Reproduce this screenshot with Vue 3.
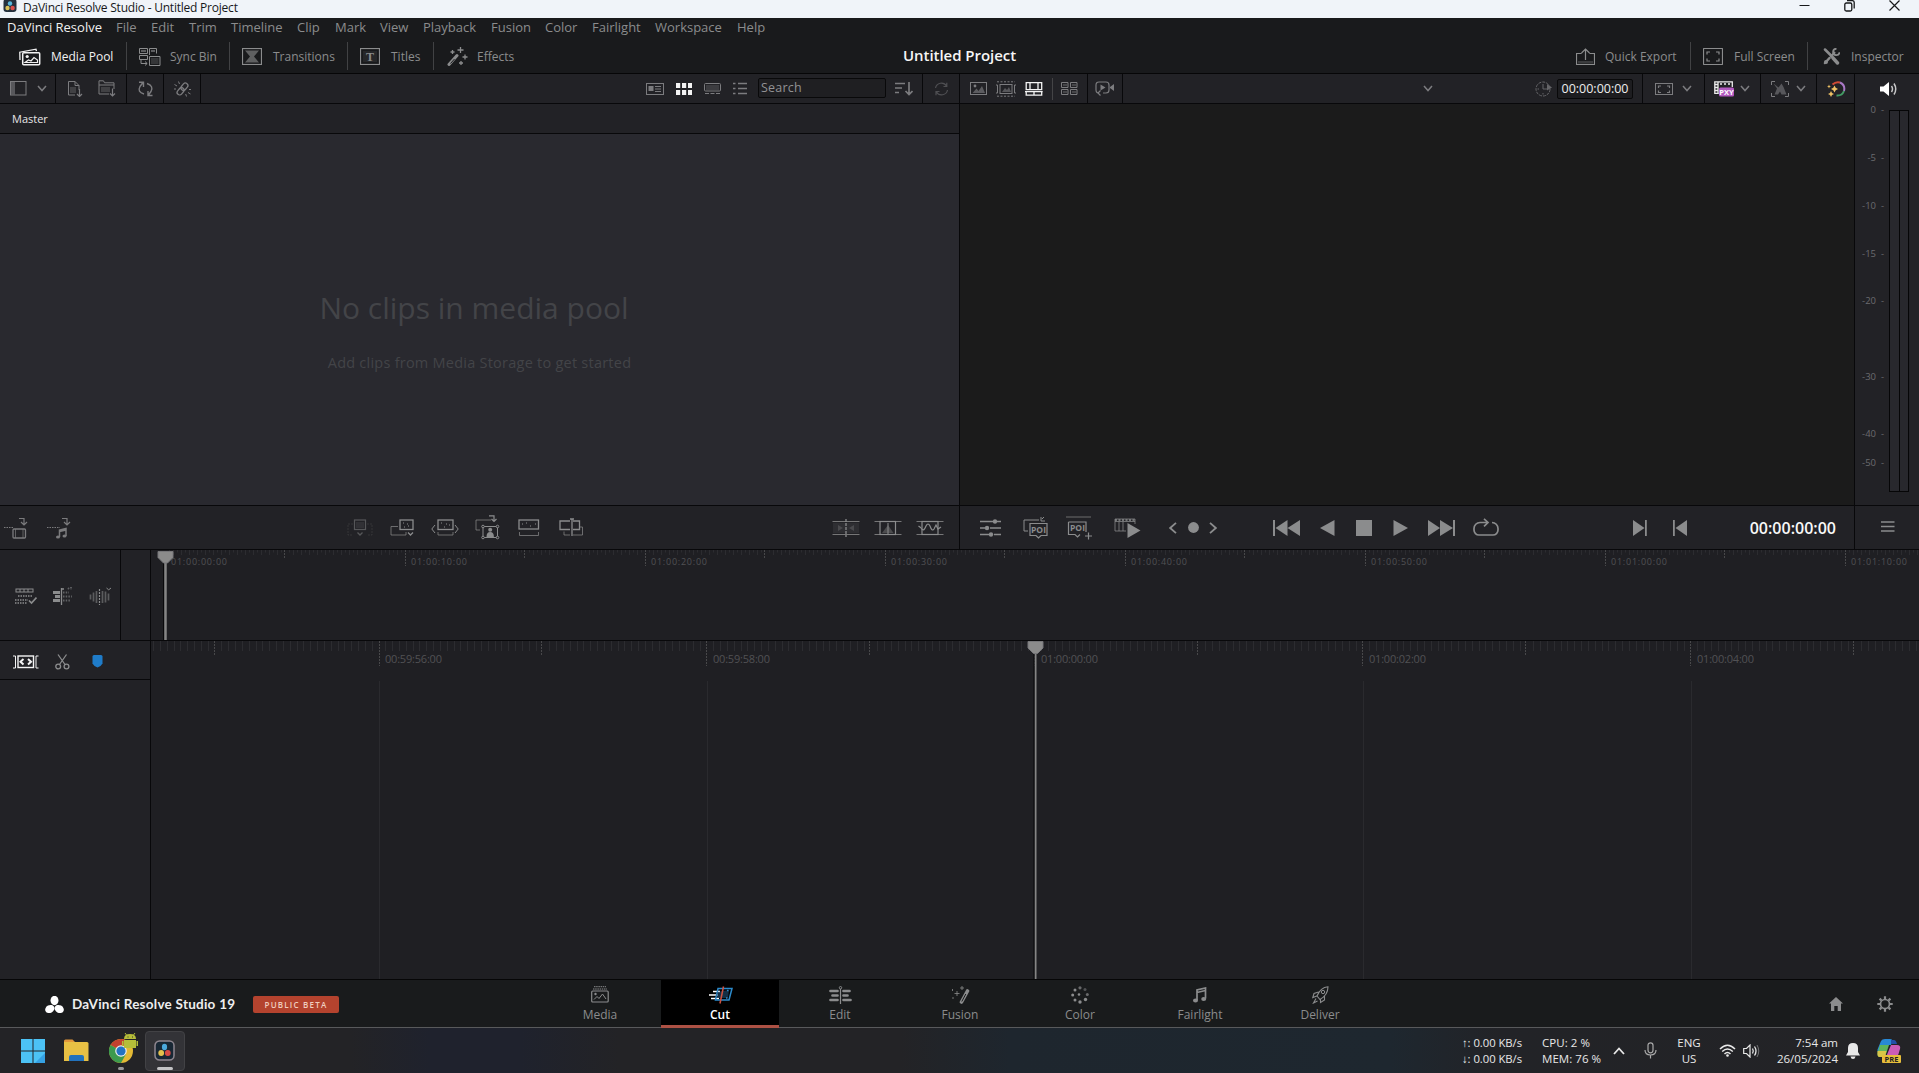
<script setup>
import { h } from 'vue'

// Icon bodies are drawn in currentColor; each entry is [width, height, markup].
const S = 'fill="none" stroke="currentColor"'
const icons = {
  app: [14, 13, '<rect x=".5" y="-1" width="13" height="13" rx="3" fill="#25313e"/><circle cx="7" cy="3.5" r="2.2" fill="#5ab8dd"/><circle cx="4.5" cy="8" r="2.2" fill="#d9c25a"/><circle cx="9.6" cy="8" r="2.2" fill="#d9504c"/>'],
  min: [11, 11, `<path d="M.5 5.5h10" ${S}/>`],
  restore: [11, 12, `<rect x=".8" y="3" width="7" height="8" rx="1.5" ${S} stroke-width="1.3"/><path d="M3 .6h5.200q2 0 2 2v6" ${S} stroke-width="1.3"/>`],
  close: [11, 11, `<path d="M.5.5l10 10M10.500.5l-10 10" ${S} stroke-width="1.2"/>`],
  pool: [22, 18, `<path d="M1 12L.8 4.200 17 1.200l.4 2" ${S} stroke-width="1.3"/><rect x="3.700" y="4.700" width="17" height="12" rx="1" ${S} stroke-width="1.500"/><circle cx="8.200" cy="8.500" r="1.600" fill="currentColor"/><path d="M6 14.500l3.500-2.500 2.500 1 3-3.500 3.500 2.500v2.500z" ${S} stroke-width="1.200"/>`],
  sync: [22, 18, `<path d="M.5.5h8v5h-8zM.5 7.500h8v4h-8zM10.500 7V.5h7v5" ${S}/><path d="M2 2h5v2H2zM12 2h4v2h-4z" fill="currentColor" opacity=".6"/><path d="M10.500 8.500h10.500v9H10.500zM2 12v3.500h6m-2-2l2.200 2-2.200 2" ${S}/><rect x="12" y="10" width="7.500" height="6" fill="currentColor" opacity=".25"/>`],
  trans: [20, 17, `<rect x=".5" y=".5" width="19" height="16" ${S} stroke-width="1.200"/><path d="M3 2.500h14L12 8.500l5 6H3l5-6z" fill="currentColor" opacity=".62"/>`],
  titles: [20, 17, `<rect x=".5" y=".5" width="19" height="16" ${S} stroke-width="1.200"/><rect x="3" y="3" width="14" height="11" fill="currentColor" opacity=".12"/><text x="10" y="12.700" font-size="12" font-weight="bold" text-anchor="middle" font-family="Liberation Serif" fill="currentColor">T</text>`],
  fx: [21, 19, `<path d="M2 17.500l8-9" ${S} stroke-width="3" stroke-linecap="round"/><path d="M3.500 16.500l4-4.500" stroke="#191a1c" stroke-width="1"/><path d="M13.500 0v6M10.500 3h6M5.500 3v4M3.500 5h4M18 7.500v5M15.500 10h5M14 14v4M12 16h4" ${S} stroke-width="1.300"/>`],
  export: [19, 18, `<path d="M5.500 5.500h-5v11h18v-11h-5M9.500 12V1.500M5.500 5l4-4 4 4" ${S} stroke-width="1.200"/><rect x="2" y="13" width="15" height="2.500" fill="currentColor" opacity=".3"/>`],
  full: [20, 17, `<rect x=".5" y=".5" width="19" height="16" rx=".5" ${S} stroke-width="1.200"/><path d="M4 6.500V4h3M13 4h3v2.500M16 10.500V13h-3M7 13H4v-2.500" ${S} stroke-width="1.200"/>`],
  tools: [17, 17, `<path d="M2 1.500l7.500 7.500M6.500 10L2 15" ${S} stroke-width="2.500" stroke-linecap="round"/><path d="M10 10l4.500 5" ${S} stroke-width="3.400" stroke-linecap="round"/><path d="M7.500 9l4.500-5" ${S} stroke-width="2"/><path d="M13.500.8a3.200 3.200 0 1 0 3 3.500" ${S} stroke-width="1.800"/><circle cx="3" cy="14" r="2" fill="currentColor"/>`],
  panel: [17, 15, `<rect x=".5" y=".5" width="15.500" height="13.500" ${S}/><rect x="1" y="1" width="4" height="12.500" fill="currentColor" opacity=".6"/>`],
  chev: [10, 7, `<path d="M1 1l4 4.500L9 1" ${S} stroke-width="1.500"/>`],
  imp: [15, 16, `<path d="M7 14H.5V.5h6.500l4 4V9M7 .5v4h4" ${S}/><rect x="2" y="6" width="6" height="6" fill="currentColor" opacity=".35"/><path d="M11.500 8v7.500M9 13l2.500 2.500L14 13" ${S} stroke-width="1.200"/>`],
  impf: [18, 17, `<path d="M11 14H1V.8h4.500l1 2H16V9M1 5h15" ${S}/><rect x="3" y="7" width="9" height="5" fill="currentColor" opacity=".35"/><path d="M14.500 8.500V16M12 13.500l2.500 2.500 2.500-2.500" ${S} stroke-width="1.200"/>`],
  resync: [17, 16, `<path d="M7 13Q0 11 3 5.500L6 1.500M2 1.200h4.500V6M10 2.500Q17 5 14 10.500l-3 4M15.500 14.500H11V10" ${S} stroke-width="1.400"/>`],
  link: [17, 16, `<g transform="rotate(-50 8.500 8)"><rect x="1.500" y="5.500" width="8" height="5" rx="2.500" ${S} stroke-width="1.300"/><rect x="7.500" y="5.500" width="8" height="5" rx="2.500" ${S} stroke-width="1.300"/></g><path d="M4.500.5l1 2.500M.5 3.500l2.500 1.500M0 8h2M12.500 15.500l-.8-2.500M16.500 13l-2.500-1.500M17 8.500h-2" ${S}/>`],
  card: [18, 12, `<rect x=".5" y=".5" width="17" height="11" ${S}/><rect x="2.500" y="3" width="5" height="5" fill="currentColor"/><path d="M9 3.500h6M9 6h6M9 8.500h6" ${S}/>`],
  grid: [16, 12, '<path fill="currentColor" d="M0 0h4.200v5H0zM6 0h4.200v5H6zM12 0h4v5h-4zM0 7h4.200v5H0zM6 7h4.200v5H6zM12 7h4v5h-4z"/>'],
  strip: [17, 12, `<rect x=".5" y=".5" width="16" height="7.500" rx="1" ${S}/><rect x="2" y="2" width="13" height="5" fill="currentColor" opacity=".3"/><path d="M1 10.500h15" ${S} stroke-width="1.200" stroke-dasharray="4 1.500"/>`],
  list: [15, 13, `<path d="M0 1.500h2.500M0 6.500h2.500M0 11.500h2.500M5 1.500h9M5 6.500h9M5 11.500h9" ${S} stroke-width="1.700"/>`],
  sort: [18, 14, `<path d="M0 1.500h10M0 6h7M0 10.500h4M14 0v12M10.500 9l3.500 3.500L17.500 9" ${S} stroke-width="1.700"/>`],
  reload: [15, 14, `<path d="M1.500 6A6 6 0 0 1 12.500 4M13.500 8A6 6 0 0 1 2.500 10M12.800.8V4.500H9.500M2 13.200V9.500h3.500" ${S} stroke-width="1.200"/>`],
  pic: [17, 13, `<rect x=".5" y=".5" width="16" height="12" ${S}/><circle cx="5" cy="4" r="1.400" fill="currentColor"/><path d="M2.500 11l4-4.500 2 2.500L12 4l3 7z" fill="currentColor" opacity=".65"/>`],
  clip: [20, 16, `<path d="M1 .8h18M1 15.200h18" ${S} stroke-dasharray="2 1.500"/><path d="M0 4h1.500v8H0M20 4h-1.500v8H20" ${S}/><rect x="4" y="3.500" width="12" height="9" ${S}/><path d="M6 11l3-4 2 2 2-3 2 5z" fill="currentColor" opacity=".6"/>`],
  tape: [18, 14, `<path d="M1.200.7h15.500v7H1.200zM5 .7v7M13 .7v7M0 9.700h17.700M1.200 9.700v3.500h15.500v-3.500M9 9.700v3.500" ${S} stroke-width="1.300"/>`],
  multi: [17, 13, `<path d="M.5.500h6.500v5H.5zM9.500.500H16v5H9.500zM.5 7.500h6.500v5H.5zM9.500 7.500H16v5H9.500z" ${S}/><path d="M2 2h4v2H2zM11 2h4v2h-4zM2 9h4v2H2zM11 9h4v2h-4z" fill="currentColor" opacity=".4"/>`],
  cam: [20, 15, `<path d="M4 12Q1 12 1 9V4q0-3 3-3h7q3 0 3 3v5q0 3-3 3H8M5.500 14.500L3 12l2.500-2.500" ${S} stroke-width="1.200"/><path d="M5.500 3.500l5 3-5 3zM15 6l4-3v7l-4-3z" fill="currentColor"/>`],
  clock: [18, 16, `<circle cx="8" cy="8" r="7" ${S} stroke-dasharray="3 1"/><path d="M8 3v5h4M8 12v1.500M2.500 8H4" ${S}/><path d="M12 3l5 3.500-5 3z" fill="currentColor"/>`],
  safe: [18, 12, `<rect x=".5" y=".5" width="17" height="11" ${S}/><path d="M3.500 5V3H6M12 3h2.500v2M14.500 7.500V9.500H12M6 9.500H3.500v-2" ${S} stroke-width="1.200"/>`],
  pxy: [20, 16, `<path d="M18.300 6V.8H.8v11.500h4M4 1v11M.5 3.500H4M.5 6.500H4M.5 9.500H4" fill="none" stroke="#eee" stroke-width="1.300"/><path d="M6 3h2M10 3h2M14 3h2" stroke="#eee" stroke-width="1.300"/><rect x="5" y="6.500" width="15" height="9" rx="1.500" fill="#b35ac0"/><text x="12.500" y="14" font-size="7.500" font-weight="bold" text-anchor="middle" font-family="Open Sans" fill="#fff">PXY</text>`],
  track: [18, 16, `<path d="M.5 4V.5H4M14 .5h3.500V4M17.500 12v3.500H14M4 15.500H.5V12" ${S}/><path d="M2.500 2.500l5 4 3-4 2 3.500 3 7.500h-5l-1.500-3-2 3H3.500l2.500-6z" fill="currentColor" opacity=".6"/>`],
  magic: [19, 16, '<path d="M5.500 3.500Q9 .2 13 1.500" fill="none" stroke="#cf4b35" stroke-width="2"/><path d="M13 1.500Q18.500 4 17 10" fill="none" stroke="#a978c6" stroke-width="2"/><path d="M17 10Q15 15 9.500 14.500" fill="none" stroke="#439b65" stroke-width="2"/><path d="M7.500 4.500l1.200 2.300L11 8 8.700 9.200 7.500 11.500 6.300 9.200 4 8l2.300-1.200zM4 10l1 2 2 1-2 1-1 2-1-2-2-1 2-1zM2 3.500l.6 1.400L4 5.500l-1.400.6L2 7.500l-.6-1.400L0 5.500l1.400-.6z" fill="#efc265"/>'],
  spk: [18, 16, `<path d="M0 5.500h3.500L9 1v14l-5.500-4.500H0z" fill="currentColor"/><path d="M11.500 5q2 3 0 6M14 2.500q3.500 5.500 0 11" ${S} stroke-width="1.500" opacity=".75"/>`],
  vonly: [24, 22, `<path d="M0 10.500h10" ${S} stroke-dasharray="1.500 1"/><path d="M15 1.500h5v6M17 5l3 3 3-3" ${S} stroke-width="1.200"/><rect x="9" y="12" width="12.500" height="9" rx="1" ${S} stroke-width="1.300"/><path d="M11.500 12v9M19 12v9" ${S} stroke-width=".7"/>`],
  aonly: [24, 22, `<path d="M0 10.500h13" ${S} stroke-dasharray="1.500 1"/><path d="M15 1.500h5v6M17 5l3 3 3-3" ${S} stroke-width="1.200"/><path d="M12.500 20v-7l6.500-1.500V19M12.500 14.500L19 13" ${S} stroke-width="1.500"/><ellipse cx="11" cy="20" rx="2" ry="1.600" fill="currentColor"/><ellipse cx="17.500" cy="19" rx="2" ry="1.600" fill="currentColor"/>`],
  smart: [26, 18, `<path d="M6 5H1v11h4M20 5h5v11h-4" ${S} stroke-dasharray="2 1" opacity=".35"/><rect x="7.500" y="1" width="11" height="9.500" ${S} stroke-width="1.200"/><rect x="9" y="3" width="8" height="6" fill="currentColor" opacity=".3"/><path d="M10.500 13.500l2.500 2.500 2.500-2.500" ${S} stroke-width="1.300"/>`],
  append: [26, 18, `<rect x="10" y="1" width="13" height="9.500" ${S} stroke-width="1.300"/><path d="M13 4h1m3 1h1m-4 3h1m3-1h1" ${S}/><path d="M8 7.500H1V16h15v-3" ${S} opacity=".7"/><path d="M18 13.500l2.500 2.500 2.500-2.500" ${S} stroke-width="1.300"/>`],
  ripple: [28, 18, `<rect x="7" y="1" width="15" height="9.500" ${S} stroke-width="1.300"/><path d="M10 4h1m4 1h1m-3 3h1m4-2h1" ${S}/><path d="M7 13v3h15v-3" ${S} opacity=".7"/><path d="M4 6L.8 10 4 14M24 6l3.200 4L24 14" ${S}/>`],
  closeup: [26, 25, `<path d="M5 15H1V5h15" ${S} opacity=".7"/><path d="M14 .8h5v5M16.500 4l2.500 2.500L21.500 4" ${S} stroke-width="1.200"/><rect x="8" y="11.500" width="14.500" height="11" ${S}/><circle cx="15.200" cy="14.700" r="2" fill="currentColor"/><path d="M11.500 22q0-5 3.700-5t3.700 5z" fill="currentColor"/><g fill="#222226" stroke="currentColor"><circle cx="8" cy="11.500" r="1.300"/><circle cx="22.500" cy="11.500" r="1.300"/><circle cx="8" cy="22.500" r="1.300"/><circle cx="22.500" cy="22.500" r="1.300"/></g>`],
  place: [22, 18, `<rect x="1" y="1" width="19.500" height="9" ${S} stroke-width="1.300"/><path d="M4 5h1m3-1h1m3 3h1m4-2h1" ${S}/><path d="M1.500 13v3.500h19V13" ${S} opacity=".7"/>`],
  over: [24, 19, `<path d="M11 3H1v8.500h10M14 3h6.500v8.500H14" ${S} stroke-width="1.300"/><path d="M5 13.500V17h6M14 17h9.500V9H21" ${S} opacity=".7"/><path d="M13 1v17M11 1h4" ${S} stroke-width="1.300"/>`],
  cutt: [28, 20, `<path d="M.5 3.500h27M.5 16.500h27" ${S} stroke-width=".8"/><path d="M14 1v18" ${S} stroke-width="1.300" stroke-dasharray="3 1"/><rect x="1" y="5" width="26" height="10" fill="currentColor" opacity=".12"/><path d="M6 7l5 3-5 3zM22 7l-5 3 5 3z" fill="currentColor" opacity=".3"/>`],
  diss: [28, 20, `<path d="M.5 3.500h27M.5 16.500h27" ${S} stroke-width=".8"/><rect x="6" y="3.500" width="15.500" height="13" ${S} stroke-width="1.200"/><path d="M8 15l6-8 5.500 8z" fill="currentColor" opacity=".4"/><path d="M14 5v11" ${S}/>`],
  smooth: [28, 20, `<path d="M.5 3.500h27M.5 16.500h27" ${S} stroke-width=".8"/><rect x="6" y="3.500" width="16" height="13" ${S} stroke-width="1.200"/><path d="M2.500 8l2 1.500C7 13 8 13 10 8q2-4 4 0 2 6 4 3l2-4 2 4 3-2" ${S} stroke-width="1.200"/>`],
  sliders: [22, 18, `<path d="M0 2.500h13M17 2.500h4M0 9h5M10 9h11M0 15.500h9M14 15.500h7" ${S} stroke-width="1.600"/><g fill="currentColor"><circle cx="15" cy="2.500" r="2.200"/><circle cx="7" cy="9" r="2.200"/><circle cx="11" cy="15.500" r="2.200"/></g>`],
  poi: [26, 22, `<path d="M5 14H1V3h15M18 0v4h4M21 0l-2 2" ${S}/><path d="M7 6.500h17v12h-6l-2.500 2.500-2.500-2.500H7z" ${S} stroke-width="1.200"/><text x="15.500" y="15.700" font-size="8.500" font-weight="bold" text-anchor="middle" font-family="Open Sans" fill="currentColor">POI</text>`],
  poip: [27, 24, `<path d="M0 1h25" ${S} opacity=".7"/><path d="M2.500 6h17.500v10M14 18.500l-2.500 2.500-2.500-2.500H2.500V6M22.500 16.500v7M19 20h7" ${S} stroke-width="1.200"/><text x="11.500" y="15" font-size="8.500" font-weight="bold" text-anchor="middle" font-family="Open Sans" fill="currentColor">POI</text>`],
  fast: [27, 20, `<path d="M1 13V1h20v5M1 3.500h20M5 3.500V13M1 13h11M9 3.500V13" ${S} opacity=".75"/><path d="M1 2h20" ${S} stroke-width="1.500" stroke-dasharray="2 1.500"/><path d="M13.500 5L26.500 12.500l-13 7.500z" fill="currentColor"/>`],
  lt: [8, 12, `<path d="M7 .8L1.200 6 7 11.200" ${S} stroke-width="1.800"/>`],
  gt: [8, 12, `<path d="M1 .8L6.800 6 1 11.200" ${S} stroke-width="1.800"/>`],
  dot: [11, 11, '<circle cx="5.500" cy="5.500" r="5.400" fill="currentColor"/>'],
  first: [27, 16, '<path d="M0 0h2v16H0zM14.500 0v16L2.500 8zM27 0v16L14.500 8z" fill="currentColor"/>'],
  rev: [15, 16, '<path d="M14.500 0v16L0 8z" fill="currentColor"/>'],
  stop: [16, 16, '<path d="M0 0h16v16H0z" fill="currentColor"/>'],
  play: [15, 16, '<path d="M.5 0v16L15 8z" fill="currentColor"/>'],
  last: [27, 16, '<path d="M25 0h2v16h-2zM0 0v16l12-8zM12 0v16l13-8z" fill="currentColor"/>'],
  loop: [26, 19, `<path d="M9.500 4.500H7a6 6 0 0 0-6 6v1.500a5 5 0 0 0 5 5h14a5 5 0 0 0 5-5v-1.500a6 6 0 0 0-6-6M7.500 4.500H15M11 .8l4 3.700-4 3.800" ${S} stroke-width="1.700"/>`],
  out: [14, 16, '<path d="M0 0v16l11.500-8zM12 0h1.800v16H12z" fill="currentColor"/>'],
  inn: [14, 16, '<path d="M14 0v16L2.500 8zM0 0h1.800v16H0z" fill="currentColor"/>'],
  burger: [14, 11, `<path d="M0 1h13.500M0 5.500h13.500M0 10h13.500" ${S} stroke-width="1.300"/>`],
  trk: [22, 17, `<rect x="1" y="1" width="17" height="3" ${S}/><path d="M5 1v3M9 1v3M13 1v3" ${S}/><path d="M3 8h15M0 12h13M0 15h12" ${S} stroke-width="2" stroke-dasharray="1.500 1" opacity=".75"/><path d="M14 12.500l2.500 2.500L21.500 9.500" ${S} stroke-width="1.700"/>`],
  mag: [20, 18, `<path d="M0 5.500h7M2 9.500h5M0 13.500h7" ${S} stroke-width="3"/><path d="M8.500 1v17M8 2h3" ${S} stroke-width="1.300"/><path d="M10 5.500h6M10 9.500h9M10 13.500h7M15 1l1 1M18 0v3" ${S} stroke-width="1.800" stroke-dasharray="1.500 1.200" opacity=".6"/>`],
  aud: [23, 19, `<path d="M1.500 7.500v5M4.500 5.500v9M7.500 4v12M13.500 4v12M16.500 4.500v11M19.500 6.500v7" ${S} stroke-width="1.700" opacity=".55"/><path d="M10.500 2v16" ${S} stroke-width="1.200" stroke-dasharray="2 1"/><path d="M17.500 1l2.200 1.800L22 1" ${S}/>`],
  fit: [26, 14, `<path d="M0 1h2.500v12H0M25.500 1H23v12h2.500" ${S} stroke="#999"/><rect x="5" y="1" width="15.500" height="11.500" ${S} stroke-width="1.400"/><path d="M10.500 4L7.500 6.700l3 2.700M15 4l3 2.700-3 2.700" ${S} stroke-width="2"/>`],
  cut: [15, 16, `<path d="M3 .5l7 10M11.500.5l-7 10" ${S} stroke-width="1.300"/><circle cx="3.200" cy="12.500" r="2.400" ${S} stroke-width="1.300"/><circle cx="11.500" cy="12.500" r="2.400" ${S} stroke-width="1.300"/>`],
  mark: [11, 13, '<path d="M2 0h7q1.500 0 1.500 1.500V8.500Q9 11.500 5.500 12.500 2 11.500.5 8.500V1.500Q.5 0 2 0z" fill="#1f7cc9"/>'],
  logo: [19, 18, '<g fill="#fff"><ellipse cx="9.500" cy="4.500" rx="4" ry="4.700"/><ellipse cx="4.800" cy="13" rx="4.800" ry="3.900" transform="rotate(-28 4.800 13)"/><ellipse cx="14.200" cy="13" rx="4.800" ry="3.900" transform="rotate(28 14.200 13)"/></g>'],
  nMedia: [18, 17, `<path d="M3 .7h12M2 3h14" ${S} stroke-dasharray="1.500 .7"/><rect x=".7" y="5" width="16.500" height="11" rx="1" ${S} stroke-width="1.200"/><circle cx="4.500" cy="8" r="1.200" fill="currentColor"/><path d="M3 13.500l3-3 2 2 3.500-4.500 3.500 5" ${S}/>`],
  nCut: [25, 18, '<path d="M5 5.500h7M1 9h9M3 12.500h8" stroke="#fff" stroke-width="1.300"/><path d="M10 2.500h14l-3 11.500H7.500z" fill="none" stroke="#2c8acb" stroke-width="1.500"/><path d="M9 6l12-2-1 8H8z" fill="#24567f" opacity=".55"/><path d="M19 4.500h1.500M18 12h1.500" stroke="#2c8acb" stroke-width="1.500"/><path d="M15.500.5l-3.500 17" stroke="#cf5140" stroke-width="1.500"/>'],
  nEdit: [23, 18, `<path d="M1.500 5h7M3.500 9.500h5M1.500 14h7M14.500 5h6M14.500 9.500h4M14.500 14h7" ${S} stroke-width="2.700" stroke-linecap="round"/><path d="M11.500 3v15" ${S} stroke-width="1.200"/><circle cx="11.500" cy="1.700" r="1.200" ${S}/>`],
  nFusion: [21, 18, `<path d="M11.500 16l6-11" ${S} stroke-width="3.600" stroke-linecap="round"/><path d="M11.800 15.500l4-7.500" stroke="#191b1c" stroke-width="1"/><path d="M12 0v4M10 2h4M7 5v5M4.500 7.500h5M2.500 3v2M2 12h2" ${S} opacity=".8"/>`],
  nColor: [18, 18, '<g fill="currentColor"><circle cx="9" cy="1.800" r="1.600" opacity=".7"/><circle cx="14" cy="3.500" r="1.500" opacity=".5"/><circle cx="16.300" cy="8.500" r="1.500" opacity=".7"/><circle cx="14.500" cy="13.500" r="1.700"/><circle cx="9" cy="16" r="1.700"/><circle cx="4" cy="14" r="1.500"/><circle cx="1.700" cy="9" r="1.500"/><circle cx="4" cy="4" r="1.500"/><circle cx="8" cy="8.500" r="1.300"/></g>'],
  nFair: [14, 16, `<path d="M4 13V3l8.500-2v10.500M4 5.500L12.500 3.500" ${S} stroke-width="1.700"/><ellipse cx="2.500" cy="13.500" rx="2.500" ry="2" fill="currentColor"/><ellipse cx="10.700" cy="12" rx="2.500" ry="2" fill="currentColor"/>`],
  nDeliver: [17, 18, `<path d="M16 .8Q8.500 1.500 5 10l3 3.500Q16 9 16 .8zM6.500 6L2 7.500.8 11.500l4-1.500M12.500 9.500V14L8.500 16.500V13.500M4 12.500L1.500 17l4-2" ${S} stroke-width="1.100"/><circle cx="11" cy="6" r="1.700" ${S}/>`],
  home: [14, 14, '<path d="M7 0l7 6.500h-2V14H8.700V9H5.300v5H2V6.500H0z" fill="currentColor"/>'],
  gear: [16, 16, `<circle cx="8" cy="8" r="4.500" ${S} stroke-width="1.700"/><path d="M8 .3V3M8 13v2.700M.3 8H3M13 8h2.700M2.600 2.600l1.800 1.800M11.600 11.600l1.800 1.800M2.600 13.400l1.800-1.800M11.600 4.400l1.800-1.800" ${S} stroke-width="2.200"/>`],
  win: [24, 24, '<path d="M0 0h11.500v11.500H0zM12.500 0H24v11.500H12.500zM0 12.500h11.500V24H0zM12.500 12.500H24V24H12.500z" fill="#4cc2f5"/><path d="M24 14v10H14z" fill="#2c93dc" opacity=".7"/>'],
  folder: [25, 23, '<path d="M0 2q0-1.500 1.500-1.500h7L11 3H0z" fill="#e2973a"/><path d="M0 3h23q1.500 0 1.500 1.500V22H0z" fill="#e8c044"/><path d="M5 22v-4q0-2 2-2h11q2 0 2 2v4z" fill="#2272bd"/>'],
  chrome: [29, 30, '<circle cx="12" cy="18" r="12" fill="#e3b935"/><path d="M12 18L1.600 12A12 12 0 0 1 22.400 12z" fill="#c2412e"/><path d="M12 18L1.600 12A12 12 0 0 0 12 30l5-9z" fill="#3c9a4e"/><circle cx="12" cy="18" r="5.800" fill="#eee"/><circle cx="12" cy="18" r="4.600" fill="#2273c3"/><path d="M15 6q0-5 6-5t6 5zM15 7h12v8H15zM13 8h1.500v5H13zM27.500 8H29v5h-1.500z" fill="#b5bd39"/><path d="M16 0l1.500 2M26 0l-1.500 2" stroke="#b5bd39"/><path d="M18.500 4h1M23 4h1" stroke="#333"/>'],
  resolve: [21, 21, '<rect x="1" y="1" width="19" height="19" rx="4.500" fill="#182734" stroke="#8f8790" stroke-width="1.500"/><ellipse cx="10.500" cy="7" rx="2.600" ry="3.200" fill="#4ba9dc"/><circle cx="7.200" cy="13" r="2.900" fill="#e3c14d"/><circle cx="13.800" cy="13" r="2.900" fill="#d64a44"/>'],
  up: [12, 8, `<path d="M1 7l5-5.500L11 7" ${S} stroke-width="1.800"/>`],
  mic: [13, 17, `<rect x="4" y=".8" width="5" height="10" rx="2.500" ${S} stroke-width="1.200"/><path d="M1 8q0 5 5.500 5T12 8M6.500 13v3.500" ${S} stroke-width="1.200"/>`],
  wifi: [17, 13, `<path d="M1 5q7.500-7.500 15 0M3.200 7.500q5.300-5 10.600 0M5.500 10q3-3 6 0" ${S} stroke-width="1.500"/><circle cx="8.500" cy="11.500" r="1.300" fill="currentColor"/>`],
  vol: [17, 14, `<path d="M.7 4.500h2.800L7 1v12L3.500 9.500H.7z" ${S} stroke-width="1.200"/><path d="M9.500 4.500q1.500 2.500 0 5M11.500 2.500q3 4.500 0 9" ${S} stroke-width="1.300"/><path d="M14 1q3.500 6 0 12" ${S} opacity=".4"/>`],
  bell: [14, 16, '<path d="M7 0q5 0 5 5v4l2 3.500H0L2 9V5q0-5 5-5zM4.500 13.500h5Q9 16 7 16t-2.500-2.500z" fill="currentColor"/>'],
  copilot: [24, 24, '<path d="M4 2q1-2 4-2h5q3 0 2 3l-1 3H6L3 13H1.500Q0 13 .5 10.500z" fill="#2889d6"/><path d="M3 6h9l-3 9q-1 3-4 3H3q-3 0-2.500-4z" fill="#5eb45c"/><path d="M.5 12h9l-1 4q-1 2-4 2H2.500Q.5 18 .5 15z" fill="#d9c548"/><path d="M14 1h3q2 0 3 4h-6z" fill="#244fa8"/><path d="M14 6h6q4 0 3 4l-1.500 5q-1 3-4 3H9z" fill="#cb5cb7"/><rect x="5" y="16" width="19" height="8" rx="1" fill="#e6bd3b"/><text x="14.500" y="22.700" font-size="7.500" font-weight="bold" text-anchor="middle" font-family="Open Sans" fill="#222">PRE</text>'],
}
const Ic = (p) => {
  const [w, ht, body] = icons[p.n]
  return h('svg', { width: w, height: ht, viewBox: `0 0 ${w} ${ht}`, innerHTML: body })
}
Ic.props = ['n']

const menu = [['File', 35], ['Edit', 38], ['Trim', 42], ['Timeline', 66], ['Clip', 38], ['Mark', 45], ['View', 43], ['Playback', 68], ['Fusion', 54], ['Color', 47], ['Fairlight', 63], ['Workspace', 82], ['Help', 40]]
const meter = [['0', 48], ['-5', 48], ['-10', 47.500], ['-15', 47.500], ['-20', 76], ['-30', 57], ['-40', 29], ['-50', 20]]
const overview = ['01:00:00:00', '01:00:10:00', '01:00:20:00', '01:00:30:00', '01:00:40:00', '01:00:50:00', '01:01:00:00', '01:01:10:00']
const detail = ['00:59:56:00', '00:59:58:00', '01:00:00:00', '01:00:02:00', '01:00:04:00']
const pages = [['Media', 'nMedia'], ['Cut', 'nCut'], ['Edit', 'nEdit'], ['Fusion', 'nFusion'], ['Color', 'nColor'], ['Fairlight', 'nFair'], ['Deliver', 'nDeliver']]

// Ruler ticks, in the ruler's own coordinates.
const topTicks = []
for (let i = 1; i < 440; i++) {
  const m = i % 60
  topTicks.push({ x: Math.floor(14 + i * 4) + (m === 30 ? -0.5 : 0.5), y: m === 0 ? 16 : m === 30 ? 8 : i % 2 ? 2.500 : 5, c: m === 0 || m === 30 ? 'major' : 'minor' })
}
const lowTicks = []
for (let i = -33; i < 226; i++) {
  const m = ((i % 48) + 48) % 48
  lowTicks.push({ x: Math.floor(228 + i * 6.8333) + (m === 24 ? -0.5 : 0.5), y: m === 0 ? 25 : m === 24 ? 14 : 10, c: m === 0 || m === 24 ? 'major' : 'minor' })
}
const guides = [228.5, 556.5, 884.5, 1212.5, 1540.5]
</script>

<template>
  <div class="screen">
    <header class="titlebar">
      <Ic n="app" /><span class="wtitle">DaVinci Resolve Studio - Untitled Project</span>
      <div class="winbtns"><Ic n="min" /><Ic n="restore" /><Ic n="close" /></div>
    </header>
    <nav class="menubar">
      <span class="brand">DaVinci Resolve</span>
      <span v-for="m in menu" :key="m[0]" :style="{ width: m[1] + 'px' }">{{ m[0] }}</span>
    </nav>
    <div class="mainbar">
      <div class="side">
        <div class="btn b1 on"><Ic n="pool" /><span>Media Pool</span></div>
        <div class="btn b2"><Ic n="sync" /><span>Sync Bin</span></div>
        <div class="btn b3"><Ic n="trans" /><span>Transitions</span></div>
        <div class="btn b4"><Ic n="titles" /><span>Titles</span></div>
        <div class="btn b5"><Ic n="fx" /><span>Effects</span></div>
      </div>
      <div class="project">Untitled Project</div>
      <div class="side right">
        <div class="btn b6"><Ic n="export" /><span>Quick Export</span></div>
        <div class="btn b7"><Ic n="full" /><span>Full Screen</span></div>
        <div class="btn b8"><Ic n="tools" /><span>Inspector</span></div>
      </div>
    </div>

    <main class="upper">
      <section class="media">
        <div class="bar">
          <div class="cell c1"><Ic n="panel" /><Ic n="chev" /></div>
          <div class="cell c2"><Ic n="imp" /><Ic n="impf" /></div>
          <div class="cell c3"><Ic n="resync" /></div>
          <div class="cell c3"><Ic n="link" /></div>
          <div class="cell views"><Ic n="card" /><Ic n="grid" class="white" /><Ic n="strip" /><Ic n="list" /></div>
          <div class="search">Search</div>
          <div class="cell c5"><Ic n="sort" /></div>
          <div class="cell c6"><Ic n="reload" /></div>
        </div>
        <div class="crumb">Master</div>
        <div class="empty">
          <h2>No clips in media pool</h2>
          <p>Add clips from Media Storage to get started</p>
        </div>
        <div class="transport">
          <div class="grp g1"><Ic n="vonly" /><Ic n="aonly" /></div>
          <div class="grp g2"><Ic n="smart" class="dim" /><Ic n="append" /><Ic n="ripple" class="rip" /><Ic n="closeup" class="clo" /><Ic n="place" /><Ic n="over" class="ovr" /></div>
          <div class="grp g3"><Ic n="cutt" /><Ic n="diss" /><Ic n="smooth" /></div>
        </div>
      </section>
      <section class="viewer">
        <div class="bar">
          <div class="cell v1"><Ic n="pic" /><Ic n="clip" /><Ic n="tape" class="white" /><i class="thin"></i><Ic n="multi" /></div>
          <div class="cell v2"><Ic n="cam" /></div>
          <div class="cell v3"><Ic n="chev" /></div>
          <div class="cell v4"><Ic n="clock" class="dim2" /><span class="tc">00:00:00:00</span></div>
          <div class="cell v5"><Ic n="safe" /><Ic n="chev" /></div>
          <div class="cell v6"><Ic n="pxy" /><Ic n="chev" /></div>
          <div class="cell v7"><Ic n="track" /><Ic n="chev" /></div>
          <div class="cell v8"><Ic n="magic" /></div>
        </div>
        <div class="stage"></div>
        <div class="transport">
          <div class="grp t1"><Ic n="sliders" /><Ic n="poi" /><Ic n="poip" /><Ic n="fast" /></div>
          <div class="grp t2"><Ic n="lt" /><Ic n="dot" /><Ic n="gt" /></div>
          <div class="grp t3"><Ic n="first" /><Ic n="rev" /><Ic n="stop" /><Ic n="play" /><Ic n="last" /><Ic n="loop" /></div>
          <div class="grp t4"><Ic n="out" /><Ic n="inn" /></div>
          <div class="bigtc">00:00:00:00</div>
        </div>
      </section>
      <aside class="audio">
        <div class="spk"><Ic n="spk" /></div>
        <div class="meter">
          <div class="scale"><div v-for="m in meter" :key="m[0]" :style="{ height: m[1] + 'px' }"><span>{{ m[0] }}&nbsp;&nbsp;-</span></div></div>
          <div class="lvl"><i></i><i></i></div>
        </div>
        <div class="transport more"><Ic n="burger" /></div>
      </aside>
    </main>

    <section class="overview">
      <div class="opts"><Ic n="trk" /><Ic n="mag" /><Ic n="aud" /></div>
      <div class="gutter"></div>
      <div class="canvas">
        <svg class="ticks" width="1768" height="20"><line v-for="(t, i) in topTicks" :key="i" :x1="t.x" :x2="t.x" y1="0" :y2="t.y" :class="t.c" /></svg>
        <div class="labels"><span v-for="l in overview" :key="l">{{ l }}</span></div>
        <svg class="head h1" width="17" height="90"><path d="M8.500 11v79" stroke="#858585" stroke-width="2.500" /><path d="M6.500 12v78" stroke="#09090b" /><path d="M1 1.500h15v6l-5.500 5.500h-4L1 7.500z" fill="#8b8b8b" stroke="#77777a" /></svg>
      </div>
    </section>
    <section class="detail">
      <div class="tracks"><div class="tools"><Ic n="fit" class="white" /><Ic n="cut" /><Ic n="mark" /></div></div>
      <div class="canvas">
        <svg class="ticks" width="1768" height="338">
          <line v-for="(t, i) in lowTicks" :key="i" :x1="t.x" :x2="t.x" y1="0" :y2="t.y" :class="t.c" />
          <line v-for="g in guides" :key="g" :x1="g" :x2="g" y1="40" y2="338" stroke="#2a2a2e" />
        </svg>
        <div class="labels"><span v-for="l in detail" :key="l">{{ l }}</span></div>
        <svg class="head h2" width="17" height="338"><path d="M8.500 11v327" stroke="#858585" stroke-width="2" /><path d="M7 12v326" stroke="#09090b" /><path d="M1 .5h15v6.500l-5.500 5.500h-4L1 7z" fill="#8b8b8b" stroke="#77777a" /></svg>
      </div>
    </section>

    <footer class="pages">
      <div class="product"><Ic n="logo" /><b>DaVinci Resolve Studio 19</b><span class="badge">PUBLIC BETA</span></div>
      <div class="tabs"><div v-for="p in pages" :key="p[0]" class="tab" :class="{ active: p[0] === 'Cut' }"><div class="tin"><div class="tic"><Ic :n="p[1]" /></div><span>{{ p[0] }}</span></div></div></div>
      <div class="fright"><Ic n="home" /><Ic n="gear" /></div>
    </footer>
    <div class="taskbar">
      <div class="apps">
        <div class="app"><Ic n="win" /></div>
        <div class="app"><Ic n="folder" /></div>
        <div class="app run"><Ic n="chrome" class="chr" /></div>
        <div class="app run cur"><Ic n="resolve" /></div>
      </div>
      <div class="tray">
        <div class="two net"><span>↑: 0.00 KB/s</span><span>↓: 0.00 KB/s</span></div>
        <div class="two cpu"><span>CPU: 2 %</span><span>MEM: 76 %</span></div>
        <Ic n="up" class="tup" /><Ic n="mic" class="tmic" />
        <div class="two lang"><span>ENG</span><span>US</span></div>
        <Ic n="wifi" class="twifi" /><Ic n="vol" class="tvol" />
        <div class="two clk"><span>7:54 am</span><span>26/05/2024</span></div>
        <Ic n="bell" class="tbell" /><Ic n="copilot" class="tcop" />
      </div>
    </div>
  </div>
</template>

<style>
html, body { margin: 0; background: #1f1f23; overflow: hidden; }
</style>
<style scoped>
* { box-sizing: border-box; }
.screen { width: 1919px; height: 1073px; display: flex; flex-direction: column; overflow: hidden; font-family: "Open Sans", "Noto Sans", sans-serif; font-size: 12px; color: #8b8c8d; white-space: nowrap; line-height: 1; }
svg { display: block; flex: none; }
.white { color: #f4f4f4; }
.dim { opacity: .5; }
.dim2 { opacity: .75; }

.titlebar { height: 18px; flex: none; background: #f0f4f9; color: #17181a; display: flex; align-items: flex-start; padding-left: 3px; }
.wtitle { margin-left: 6px; font-size: 12px; line-height: 16px; height: 18px; letter-spacing: -.22px; }
.winbtns { margin-left: auto; display: flex; gap: 34px; padding-right: 19px; }
.menubar { height: 20px; flex: none; background: #191a1c; display: flex; align-items: center; padding: 0 0 2px 7px; font-size: 13px; }
.menubar .brand { width: 109px; color: #f0f0f0; }
.mainbar { height: 36px; flex: none; background: #191a1c; border-bottom: 1px solid #060607; display: flex; align-items: flex-start; padding-top: 4px; }
.side { flex: 1; display: flex; }
.right { justify-content: flex-end; }
.btn { height: 28px; display: flex; align-items: center; border-right: 1px solid #414244; padding-top: 1px; }
.btn span { margin-left: 11px; }
.on { color: #f2f2f2; }
.b1 { width: 127px; padding-left: 19px; }
.b1 span { margin-left: 10px; }
.b2 { width: 103px; padding-left: 12px; }
.b2 span { margin-left: 9px; }
.b3 { width: 118px; padding-left: 12px; }
.b4 { width: 86px; padding-left: 12px; }
.b5, .b8 { border-right: 0; padding-left: 13px; }
.b5 span { margin-left: 9px; }
.b6 { width: 115px; }
.b6 span { margin-left: 10px; }
.b7 { width: 117px; padding-left: 12px; }
.b8 { width: 111px; padding-left: 15px; }
.project { color: #f6f6f6; font-size: 15px; font-weight: 600; line-height: 26px; letter-spacing: -.05px; }

.upper { height: 476px; flex: none; display: flex; }
.media { width: 960px; display: flex; flex-direction: column; border-right: 1px solid #08080a; }
.viewer { width: 895px; display: flex; flex-direction: column; border-right: 1px solid #08080a; }
.audio { width: 64px; background: #222226; display: flex; flex-direction: column; }
.bar { height: 30px; flex: none; background: #222226; border-bottom: 1px solid #08080a; display: flex; align-items: stretch; color: #7c7c7f; }
.cell { display: flex; align-items: center; border-right: 1px solid #08080a; }
.c1 { width: 56px; padding-left: 10px; gap: 10px; }
.c2 { width: 71px; padding-left: 12px; gap: 15px; }
.c3 { width: 37px; justify-content: center; }
.views { border: 0; margin-left: auto; gap: 12px; margin-right: 10px; }
.search { width: 128px; height: 20px; margin-top: 4px; background: #1f1f22; border: 1px solid #09090a; border-radius: 2px; font-size: 12.5px; line-height: 18px; padding-left: 2px; color: #929294; letter-spacing: .2px; }
.c5 { width: 37px; padding-left: 9px; }
.c6 { width: 36px; border: 0; justify-content: center; opacity: .5; }
.v1 { width: 128px; padding-left: 10px; gap: 9px; }
.thin { width: 1px; height: 22px; background: #444446; margin: 0 -1px 0 0; }
.v2 { width: 35px; justify-content: center; }
.v3 { flex: 1; border: 0; padding-left: 300px; }
.v4 { width: 108px; gap: 4px; }
.tc { width: 76px; height: 20px; border: 1px solid #09090a; border-radius: 2px; background: #1d1d20; color: #ededed; text-align: center; line-height: 18px; font-size: 12.5px; letter-spacing: 0; }
.v5 { width: 62px; padding-left: 12px; gap: 9px; }
.v6 { width: 56px; padding-left: 9px; gap: 6px; }
.v7 { width: 56px; padding-left: 10px; gap: 7px; }
.v8 { width: 37px; border: 0; padding-left: 10px; }
.crumb { height: 30px; flex: none; background: #222226; border-bottom: 1px solid #08080a; color: #e6e6e6; font-size: 11px; line-height: 30px; padding-left: 12px; }
.empty { flex: 1; background: #29292f; display: flex; flex-direction: column; align-items: center; color: #434448; }
.empty h2 { margin: 158px 11px 0 0; font-size: 30px; line-height: 32px; font-weight: 400; }
.empty p { margin: 30px 0 0; font-size: 14.500px; line-height: 18px; letter-spacing: .24px; }
.stage { flex: 1; background: #1b1b1b; }
.transport { height: 45px; flex: none; background: #222226; border-top: 1px solid #08080a; border-bottom: 1px solid #08080a; display: flex; align-items: center; }
.grp { display: flex; align-items: center; }
.g1 { padding-left: 4px; gap: 19px; color: #7b7b7d; }
.g2 { margin-left: 276px; gap: 17px; }
.rip { margin-left: -2px; }
.clo { margin-left: -1px; }
.ovr { margin-left: 2px; }
.g3 { margin-left: auto; gap: 14px; padding-right: 15px; }
.t1 { padding-left: 20px; gap: 21px; }
.t1 svg:nth-child(2) { margin-right: -4px; }
.t2 { margin-left: 28px; gap: 10.500px; }
.t3 { margin-left: 56px; gap: 20px; }
.t3 svg:nth-child(3), .t3 svg:nth-child(4) { margin-left: 1px; }
.t3 svg:nth-child(6) { margin-left: -2px; }
.t4 { margin-left: 134px; gap: 26px; }
.bigtc { margin: 0 18px 0 auto; color: #f8f8f8; font-size: 16px; font-weight: 600; letter-spacing: 0; }
.spk { height: 30px; padding: 7px 0 0 25px; color: #fff; }
.meter { flex: 1; display: flex; }
.scale { width: 29px; font-size: 9.500px; color: #6b6b6f; }
.scale div { display: flex; justify-content: flex-end; }
.scale span { line-height: 12px; }
.lvl { margin: 6px 0 0 5px; width: 20px; height: 382px; border: 1px solid #060607; background: #28282d; display: flex; }
.lvl i { flex: 1; }
.lvl i + i { border-left: 1px solid #060607; }
.more { justify-content: center; padding: 0 0 3px 2px; }

.canvas { position: relative; flex: 1; overflow: hidden; background: #1f1f23; }
.ticks { position: absolute; left: 0; top: 0; }
.minor { stroke: #2c2c30; }
.major { stroke: #48484a; stroke-dasharray: 2 1; }
.overview { height: 91px; flex: none; display: flex; border-bottom: 1px solid #08080a; }
.opts { width: 121px; background: #222226; border-right: 1px solid #08080a; display: flex; align-items: center; padding: 2px 0 0 15px; gap: 16px; }
.gutter { width: 30px; background: #222226; border-right: 1px solid #08080a; }
.labels { display: flex; color: #515154; }
.overview .labels { padding: 6px 0 0 20px; font-size: 9px; letter-spacing: .77px; line-height: 12px; }
.overview .labels span { width: 240px; flex: none; }
.detail .labels { padding: 12px 0 0 234px; font-size: 11px; letter-spacing: -.2px; line-height: 12px; }
.detail .labels span { width: 328px; flex: none; }
.head { position: absolute; top: 0; }
.h1 { left: 6px; }
.h2 { left: 876px; }
.detail { height: 339px; flex: none; display: flex; border-bottom: 1px solid #060607; }
.tracks { width: 151px; background: #222226; border-right: 1px solid #08080a; }
.tools { height: 39px; border-bottom: 1px solid #08080a; display: flex; align-items: center; padding: 3px 0 0 13px; gap: 16px; }
.tools svg:last-child { margin-left: 6px; }

.pages { height: 48px; flex: none; background: #191b1c; border-bottom: 1px solid #58595b; display: flex; }
.product { width: 540px; display: flex; align-items: center; padding: 2px 0 0 45px; }
.product b { width: 181px; margin-left: 8px; font-family: Lato, sans-serif; font-weight: 700; font-size: 13.500px; letter-spacing: .25px; color: #eee; }
.badge { width: 86px; height: 17px; border-radius: 2px; background: #b4432e; color: #f0cdbf; font-size: 8px; font-weight: 600; letter-spacing: 1.200px; line-height: 17px; text-align: center; }
.tabs { display: flex; }
.tab { width: 120px; display: flex; justify-content: center; }
.tin { width: 118px; height: 48px; display: flex; flex-direction: column; align-items: center; font-size: 12px; }
.tic { height: 17px; margin: 6px 0 6px; display: flex; align-items: center; flex: none; }
.active .tin { background: #000; color: #fff; font-weight: 600; border-bottom: 3px solid #ad5144; }
.fright { margin-left: auto; display: flex; align-items: center; gap: 34px; padding-right: 26px; }

.taskbar { flex: 1; display: flex; background: linear-gradient(90deg, #232326 0, #232326 350px, #1f222d 430px, #1f222d 520px, #232326 620px, #232326 900px, #1e262e 1010px, #1e272f 1390px, #222327 1500px, #232326 100%); }
.apps { display: flex; padding-left: 10.500px; }
.app { width: 40px; margin: 3px 2px 2px; display: flex; justify-content: center; align-items: center; position: relative; padding-bottom: 1px; border-radius: 4px; }
.chr { margin: -5px 0 0 5px; }
.cur { background: #333337; border: 1px solid #424245; }
.run::after { content: ""; position: absolute; bottom: 1px; left: 17px; width: 6px; height: 3px; border-radius: 2px; background: #98989a; }
.cur::after { left: 11px; bottom: 0; width: 16px; background: #c3c3c5; }
.tray { margin-left: auto; display: flex; align-items: center; color: #e8e8e8; padding-right: 18px; }
.two { display: flex; flex-direction: column; line-height: 16px; font-size: 11px; }
.net { width: 80px; font-size: 11.300px; letter-spacing: -.05px; }
.cpu { width: 71px; font-size: 11.500px; letter-spacing: .05px; }
.tmic { margin-left: 19px; color: #aaa; }
.lang { width: 40px; margin-left: 12px; align-items: center; font-size: 11.500px; }
.twifi { margin-left: 10px; }
.tvol { margin-left: 7px; }
.clk { width: 78px; align-items: flex-end; font-size: 11.500px; }
.tbell { margin-left: 8px; }
.tcop { margin-left: 17px; }
</style>
